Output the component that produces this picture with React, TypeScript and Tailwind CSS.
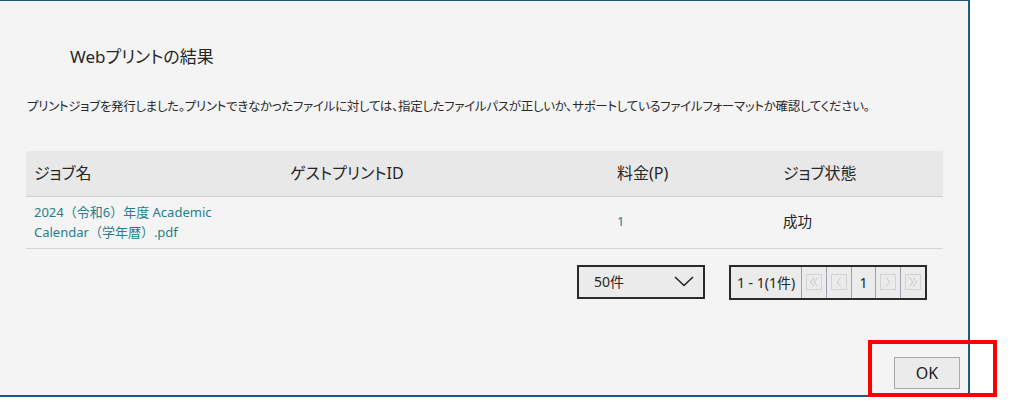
import React from "react";

const jobs = [
  {
    name: "2024（令和6）年度 Academic Calendar（学年暦）.pdf",
    guestId: "",
    price: "1",
    status: "成功",
  },
];

function Chevron({ dir }: { dir: "first" | "prev" | "next" | "last" }) {
  const paths: Record<string, string> = {
    first: "M8 3 L4 8 L8 13 M12 3 L8 8 L12 13",
    prev: "M10 3 L6 8 L10 13",
    next: "M6 3 L10 8 L6 13",
    last: "M4 3 L8 8 L4 13 M8 3 L12 8 L8 13",
  };
  return (
    <span className="flex h-[16px] w-[16px] items-center justify-center border border-[#d2d2d2]">
      <svg width="14" height="14" viewBox="0 0 16 16">
        <path d={paths[dir]} fill="none" stroke="#c4c4c4" strokeWidth="1" />
      </svg>
    </span>
  );
}

export default function App() {
  return (
    <div className="relative h-[402px] w-[1011px] bg-white font-['Noto_Sans','Noto_Sans_CJK_JP',sans-serif] text-[#262626] [font-feature-settings:'palt']">
      <div className="flex h-[397px] w-[970px] flex-col border-t border-r-2 border-b-2 border-[#1d5a80] bg-[#f4f4f4]">
        <h1 className="pl-[70px] pt-[44px] text-[17px] leading-[24px]">Webプリントの結果</h1>

        <p className="mt-[28px] pl-[27px] text-[12.5px] leading-[20px] tracking-[-0.3px] text-[#2a2a2a]">
          プリントジョブを発行しました。プリントできなかったファイルに対しては、指定したファイルパスが正しいか、サポートしているファイルフォーマットか確認してください。
        </p>

        <div className="ml-[26px] mt-[34px] w-[917px]">
          <table className="w-full table-fixed border-collapse">
            <thead>
              <tr className="h-[45px] border-b border-[#cfcfcf] bg-[#e8e8e8] text-left text-[16px]">
                <th className="w-[256px] pl-[8px] font-normal">ジョブ名</th>
                <th className="w-[327px] pl-[8px] font-normal">ゲストプリントID</th>
                <th className="w-[166px] pl-[8px] font-normal">料金(P)</th>
                <th className="pl-[8px] font-normal">ジョブ状態</th>
              </tr>
            </thead>
            <tbody>
              {jobs.map((job) => (
                <tr key={job.name} className="h-[52px] border-b border-[#d4d4d4]">
                  <td className="pl-[8px] pr-[24px] align-middle text-[13px] leading-[20px] text-[#23808f] [font-feature-settings:normal]">
                    {job.name}
                  </td>
                  <td className="pl-[8px]">{job.guestId}</td>
                  <td className="pl-[8px] text-[13px] text-[#23808f]">{job.price}</td>
                  <td className="pl-[8px] text-[14.5px]">{job.status}</td>
                </tr>
              ))}
            </tbody>
          </table>

          <div className="mt-[16px] flex justify-end gap-[24px] pr-[16px]">
            <div className="flex h-[34px] w-[128px] items-center justify-between border-2 border-[#2a2a2a] bg-[#ebebeb] pl-[15px] pr-[9px] text-[14px]">
              <span>50件</span>
              <svg width="20" height="11" viewBox="0 0 20 11">
                <path d="M1 1 L10 9.5 L19 1" fill="none" stroke="#222" strokeWidth="1.6" />
              </svg>
            </div>

            <div className="flex h-[35px] items-stretch border-2 border-[#2a2a2a] bg-[#ebebeb] text-[14px]">
              <div className="flex w-[71px] items-center justify-center border-r border-[#9aa2b1]">1 - 1(1件)</div>
              <div className="flex w-[25px] items-center justify-center border-r border-[#9aa2b1]">
                <Chevron dir="first" />
              </div>
              <div className="flex w-[25px] items-center justify-center border-r border-[#9aa2b1]">
                <Chevron dir="prev" />
              </div>
              <div className="flex w-[24px] items-center justify-center border-r border-[#9aa2b1]">1</div>
              <div className="flex w-[25px] items-center justify-center border-r border-[#9aa2b1]">
                <Chevron dir="next" />
              </div>
              <div className="flex w-[24px] items-center justify-center">
                <Chevron dir="last" />
              </div>
            </div>
          </div>
        </div>

        <div className="mt-auto flex justify-end pb-[6px] pr-[8px]">
          <button className="h-[32px] w-[66px] border border-[#a9a9a9] bg-[#ebebeb] text-[16px] text-[#222]">
            OK
          </button>
        </div>
      </div>

      <div className="absolute left-[868px] top-[340px] h-[57px] w-[129px] border-4 border-[#ff0000]" />
    </div>
  );
}
